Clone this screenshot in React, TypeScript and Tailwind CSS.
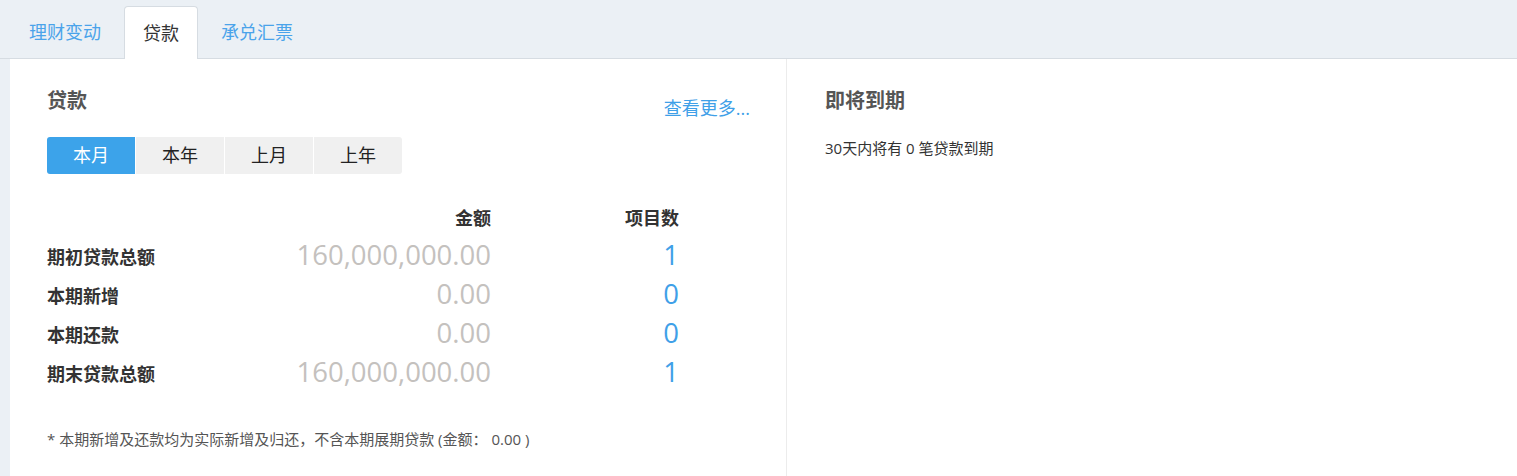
import React, { useState } from 'react';

const cjk = "font-['Open_Sans','Noto_Sans_CJK_SC',sans-serif]";

const tabs = ['理财变动', '贷款', '承兑汇票'];
const periods = ['本月', '本年', '上月', '上年'];

const rows = [
  { label: '期初贷款总额', amount: '160,000,000.00', count: '1' },
  { label: '本期新增', amount: '0.00', count: '0' },
  { label: '本期还款', amount: '0.00', count: '0' },
  { label: '期末贷款总额', amount: '160,000,000.00', count: '1' },
];

const App = () => {
  const [tab, setTab] = useState(1);
  const [period, setPeriod] = useState(0);

  return (
    <div className={`min-h-[476px] bg-[#ebf0f5] ${cjk}`}>
      <div className="flex h-[59px] items-end border-b border-[#d6dce2] pl-[10px]">
        {tabs.map((t, i) => (
          <button
            key={t}
            onClick={() => setTab(i)}
            className={
              i === tab
                ? 'mr-[4px] -mb-px flex h-[53px] items-center rounded-t-[4px] border border-b-0 border-[#d6dce2] bg-white px-[18px] text-[18px] text-[#333]'
                : 'mr-[4px] flex h-[52px] items-center px-[19px] text-[18px] text-[#4aa3ea]'
            }
          >
            {t}
          </button>
        ))}
      </div>

      <div className="ml-[10px] flex min-h-[417px] bg-white">
        <div className="w-[777px] border-r border-[#ececec] px-[37px] pt-[29px]">
          <div className="flex items-start justify-between">
            <h2 className="text-[20px] font-bold leading-[26px] text-[#555]">贷款</h2>
            <a className="mt-[7px] mr-[-1px] text-[18px] leading-[26px] text-[#3fa0e8]">查看更多...</a>
          </div>

          <div className="mt-[16px] flex gap-px">
            {periods.map((p, i) => (
              <button
                key={p}
                onClick={() => setPeriod(i)}
                className={`h-[37px] w-[88px] text-[18px] ${i === 0 ? 'rounded-l-[3px]' : ''} ${
                  i === periods.length - 1 ? 'rounded-r-[3px]' : ''
                } ${i === period ? 'bg-[#3ca3ea] text-white' : 'bg-[#f0f0f0] text-[#222]'}`}
              >
                {p}
              </button>
            ))}
          </div>

          <div className="mt-[25px] grid grid-cols-[150px_294px_188px]">
            <div className="h-[38px]" />
            <div className="flex h-[38px] items-center justify-end text-[18px] font-bold text-[#333]">金额</div>
            <div className="flex h-[38px] items-center justify-end text-[18px] font-bold text-[#333]">项目数</div>
            {rows.map((r) => (
              <React.Fragment key={r.label}>
                <div className="flex h-[39px] items-center pt-px text-[18px] font-bold text-[#333]">{r.label}</div>
                <div className="flex h-[39px] items-center justify-end pb-[3px] text-[27.5px] text-[#c4c1be]">{r.amount}</div>
                <div className="flex h-[39px] items-center justify-end pb-[3px] text-[27.5px] text-[#3fa0e8]">{r.count}</div>
              </React.Fragment>
            ))}
          </div>

          <p className="mt-[36px] text-[15px] leading-[20px] text-[#555]">
            * 本期新增及还款均为实际新增及归还，不含本期展期贷款 (金额： 0.00 )
          </p>
        </div>

        <div className="flex-1 px-[38px] pt-[29px]">
          <h2 className="text-[20px] font-bold leading-[26px] text-[#555]">即将到期</h2>
          <p className="mt-[24px] text-[15px] leading-[20px] text-[#333]">30天内将有 0 笔贷款到期</p>
        </div>
      </div>
    </div>
  );
};

export default App;
